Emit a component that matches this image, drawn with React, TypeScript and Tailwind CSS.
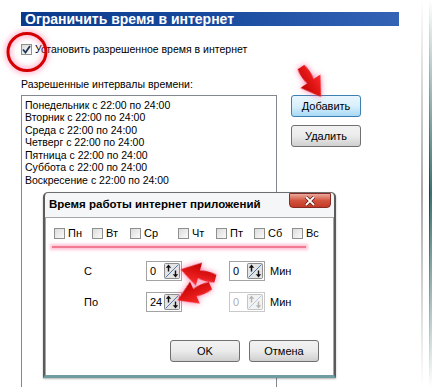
import React, { FC } from 'react'

const font = "font-['Liberation_Sans',Arial,sans-serif]"

// Win7-style checkbox
const CheckBox: FC<{ checked?: boolean }> = ({ checked }) => (
  <span className="flex h-[11px] w-[11px] shrink-0 items-center justify-center border border-[#8e8f8f] bg-linear-to-br from-[#dcdcdc] to-[#fbfbfb]">
    {checked && (
      <svg width="9" height="9" viewBox="0 0 9 9">
        <path d="M1 4.5 L3.5 7.5 L8 1" fill="none" stroke="#21355a" strokeWidth="1.8" />
      </svg>
    )}
  </span>
)

// spin arrows: slash with up/down arrows
const SpinIcon: FC<{ disabled?: boolean }> = ({ disabled }) => {
  const c = disabled ? '#b5b5b5' : '#111'
  return (
    <svg width="16" height="16" viewBox="0 0 16 16" className="shrink-0">
      <rect x="0.5" y="0.5" width="15" height="15" rx="1" fill={disabled ? '#f2f2f2' : '#e4e4e4'} stroke={disabled ? '#c4c4c4' : '#8d8d8d'} />
      <line x1="14.5" y1="1.5" x2="1.5" y2="14.5" stroke={disabled ? '#b7c9dc' : '#4b7bb3'} />
      <path d="M4.5 1.5 L1.8 4.8 H3.8 V8.5 H5.2 V4.8 H7.2 Z" fill={c} />
      <path d="M11.5 14.5 L14.2 11.2 H12.2 V7.5 H10.8 V11.2 H8.8 Z" fill={c} />
    </svg>
  )
}

const Spinner: FC<{ value: string; disabled?: boolean }> = ({ value, disabled }) => (
  <div className={`flex h-[20px] w-[36px] items-center justify-between border bg-white pl-[3px] pr-[1px] ${disabled ? 'border-[#c9c9c9] text-[#b0b0b0]' : 'border-[#a3a3a3] text-black'}`}>
    <span className="text-[11px]">{value}</span>
    <SpinIcon disabled={disabled} />
  </div>
)

const WinButton: FC<{ label: string; focused?: boolean }> = ({ label, focused }) => (
  <button
    className={`flex h-[22px] w-[70px] items-center justify-center rounded-[3px] border text-[11px] text-black ${
      focused
        ? 'border-[#3c7fb1] bg-linear-to-b from-[#eaf6fd] via-[#d9f0fc] to-[#a7d9f5]'
        : 'border-[#707070] bg-linear-to-b from-[#f2f2f2] via-[#ebebeb] to-[#cfcfcf]'
    }`}
  >
    {label}
  </button>
)

// red annotation arrow (points right before rotation)
const RedArrow: FC<{ className: string }> = ({ className }) => (
  <svg width="36" height="28" viewBox="0 0 36 28" className={`absolute drop-shadow-[0_0_3px_rgba(255,90,150,0.8)] ${className}`}>
    <defs>
      <linearGradient id="ra" x1="0" y1="0" x2="0" y2="1">
        <stop offset="0" stopColor="#ff2a2a" />
        <stop offset="1" stopColor="#c00000" />
      </linearGradient>
    </defs>
    <path d="M0 10 Q9 8 17 10 L17 2 L36 14 L17 26 L17 18 Q9 20 0 18 Z" fill="url(#ra)" />
  </svg>
)

const days = ['Пн', 'Вт', 'Ср', 'Чт', 'Пт', 'Сб', 'Вс']

const intervals = [
  'Понедельник с 22:00 по 24:00',
  'Вторник с 22:00 по 24:00',
  'Среда с 22:00 по 24:00',
  'Четверг с 22:00 по 24:00',
  'Пятница с 22:00 по 24:00',
  'Суббота с 22:00 по 24:00',
  'Воскресение с 22:00 по 24:00'
]

const App: FC = () => {
  return (
    <div className={`relative flex h-[387px] w-[434px] overflow-hidden bg-white text-black ${font}`}>
      {/* Main page */}
      <main className="flex w-[421px] shrink-0 flex-col pt-[12px] pl-[21px]">
        <h1 className="flex h-[16px] w-[378px] items-center bg-linear-to-r from-[#0b3a8c] via-[#174a9e] to-[#3463b6] pl-[4px] text-[14px] leading-none font-bold text-white">
          Ограничить время в интернет
        </h1>

        <label className="mt-[16px] flex h-[16px] items-center gap-[3px] text-[10.5px]">
          <CheckBox checked />
          <span>Установить разрешенное время в интернет</span>
        </label>

        <p className="mt-[18px] h-[16px] text-[10.5px] leading-[16px]">Разрешенные интервалы времени:</p>

        <div className="mt-[3px] flex">
          {/* List of intervals */}
          <ul className="h-[300px] w-[256px] border border-[#828790] pt-[3px] pl-[3px] text-[10.5px] leading-[12.5px]">
            {intervals.map((i) => (
              <li key={i}>{i}</li>
            ))}
          </ul>
          <div className="ml-[14px] flex flex-col gap-[8px]">
            <WinButton label="Добавить" focused />
            <WinButton label="Удалить" />
          </div>
        </div>
      </main>

      {/* Window frame on the right */}
      <div className="h-full w-[2px] bg-linear-to-b from-white via-[#a9a9a9] to-white" />
      <div className="ml-[6px] flex h-full">
        <div className="h-full w-[1px] bg-linear-to-b from-white via-[#2d3536] to-white" />
        <div className="h-full w-[2px] bg-linear-to-b from-white via-[#3b7272] to-white" />
      </div>

      {/* Dialog */}
      <section className="absolute top-[192px] left-[43px] flex h-[186px] w-[293px] flex-col rounded-t-[5px] border-x-2 border-t border-b-[3px] border-x-[#5b5b5b] border-t-[#6d6d6d] border-b-[#6f9ca1] bg-[#f5f6f7] shadow-[0_1px_2px_rgba(0,0,0,0.3)]">
        <header className="relative flex h-[24px] shrink-0 items-center pl-[4px] text-[11.5px] font-bold">
          Время работы интернет приложений
          <div className="absolute top-[0px] right-[3px] flex h-[15px] w-[42px] items-center justify-center rounded-b-[4px] border border-[#8a2a25] bg-linear-to-b from-[#e9a99c] via-[#d2543f] to-[#c23a26]">
            <svg width="12" height="10" viewBox="0 0 12 10">
              <path d="M2 1 L10 9 M10 1 L2 9" stroke="#5a1410" strokeWidth="3.2" />
              <path d="M2 1 L10 9 M10 1 L2 9" stroke="#fff" strokeWidth="1.8" />
            </svg>
          </div>
        </header>

        <div className="flex flex-1 flex-col border border-b-0 border-[#a4a6a8] bg-white pt-[10px]">
          {/* Days of week */}
          <div className="flex pl-[8px] text-[11px] leading-[11px]">
            {days.map((d) => (
              <label key={d} className={`flex items-center gap-[3px] ${d === 'Ср' ? 'w-[48px]' : 'w-[38px]'}`}>
                <CheckBox />
                <span>{d}</span>
              </label>
            ))}
          </div>

          {/* From / to */}
          <div className="mt-[22px] flex items-center pl-[38px] text-[11px]">
            <span className="w-[62px]">С</span>
            <Spinner value="0" />
            <div className="ml-[47px]">
              <Spinner value="0" />
            </div>
            <span className="ml-[5px]">Мин</span>
          </div>
          <div className="mt-[11px] flex items-center pl-[38px] text-[11px]">
            <span className="w-[62px]">По</span>
            <Spinner value="24" />
            <div className="ml-[47px]">
              <Spinner value="0" disabled />
            </div>
            <span className="ml-[5px]">Мин</span>
          </div>

          <div className="mt-[28px] flex justify-end gap-[9px] pr-[14px]">
            <WinButton label="OK" />
            <WinButton label="Отмена" />
          </div>
        </div>
      </section>

      {/* Annotations */}
      <svg width="46" height="44" viewBox="0 0 46 44" className="absolute top-[30px] left-[5px] drop-shadow-[0_0_3px_rgba(255,80,140,0.9)]">
        <ellipse cx="22" cy="22" rx="19" ry="18.5" fill="none" stroke="#d40000" strokeWidth="3" />
      </svg>
      <div className="absolute top-[246px] left-[52px] h-[2px] w-[254px] bg-[#ec5a78] opacity-80 shadow-[0_0_3px_2px_rgba(255,130,170,0.6)]" />
      <RedArrow className="top-[68px] left-[293px] rotate-[56deg]" />
      <RedArrow className="top-[260px] left-[180px] rotate-[195deg]" />
      <RedArrow className="top-[279px] left-[176px] rotate-[156deg]" />
    </div>
  )
}

export default App
